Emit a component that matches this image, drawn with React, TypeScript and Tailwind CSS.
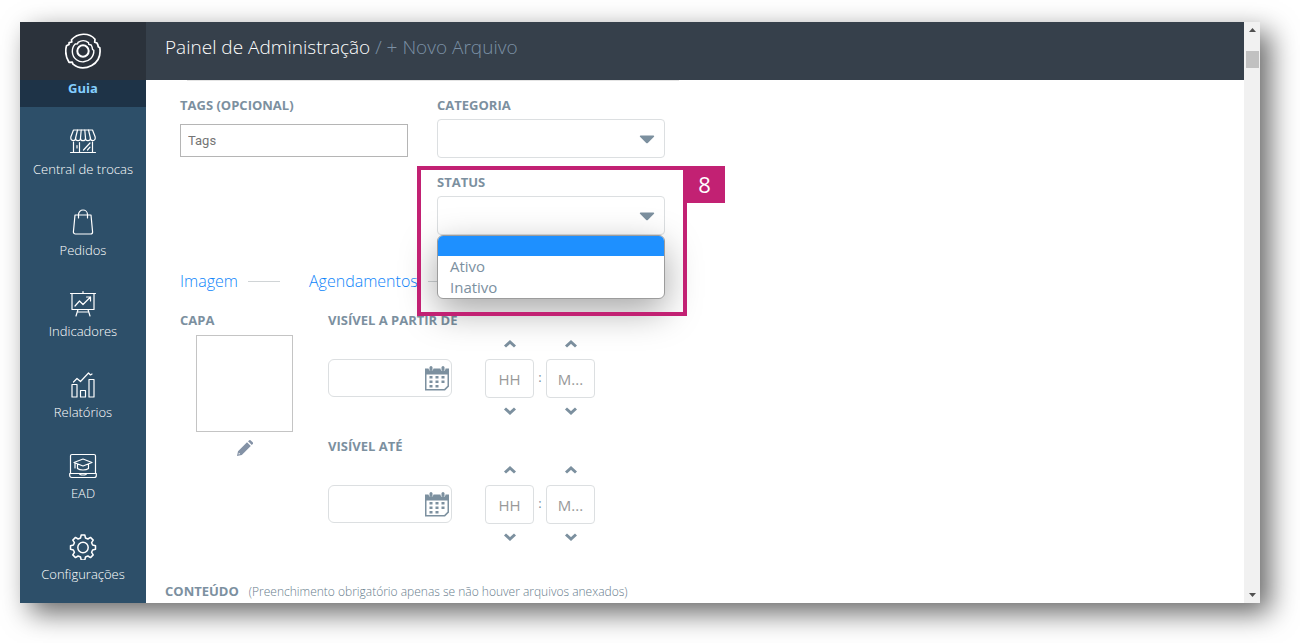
import type { ReactNode } from "react"

const iconProps = {
  width: 28,
  height: 28,
  viewBox: "0 0 28 28",
  fill: "none",
  stroke: "currentColor",
  strokeWidth: 1.2,
  strokeLinejoin: "round" as const,
  strokeLinecap: "round" as const,
  "aria-hidden": true,
}

const StoreIcon = () => (
  <svg {...iconProps}>
    <path d="M4.500 3h19l2.700 7v1.200a2.400 2.400 0 0 1-4.800 0 2.400 2.400 0 0 1-4.900 0 2.500 2.500 0 0 1-5 0 2.400 2.400 0 0 1-4.900 0 2.400 2.400 0 0 1-4.800 0V10z" />
    <path d="M8.500 3l-1.900 8M12.200 3l-.7 8M15.800 3l.7 8M19.500 3l1.900 8M1.500 25.500h25M4.500 15V25.500M10.500 15.500v10M23.500 15V25.500M8 18.500V21M14.500 23l6.500-7M18.500 23l2.500-2.800" />
  </svg>
)

const BagIcon = () => (
  <svg {...iconProps}>
    <path d="M6 7h16l1.600 17a2 2 0 0 1-2 2H6.400a2 2 0 0 1-2-2z" />
    <path d="M9.500 10V6.500a4.500 4.500 0 0 1 9 0V10" />
  </svg>
)

const BoardIcon = () => (
  <svg {...iconProps}>
    <path d="M1.500 4.500h25M14 2.500v2M3 4.500V20.500h22V4.500M9 20.500l-2 6.500M19 20.500l2 6.500M8.500 23h11" />
    <path d="M6 17l4.500-5 3.500 3.500L21.500 8M17.500 8h4v4" />
  </svg>
)

const ReportIcon = () => (
  <svg {...iconProps}>
    <path d="M3 14.500h5V27H3zM11.500 20.500h5V27h-5zM20 9.500h5V27h-5z" />
    <path d="M4.500 12l3.500-3.500 3.500 3L19.500 3l2 2L23 4" />
  </svg>
)

const CourseIcon = () => (
  <svg {...iconProps}>
    <path d="M1.500 22V5A1.500 1.500 0 0 1 3 3.500h22A1.500 1.500 0 0 1 26.500 5v17M.7 22.500h26.600v2a2 2 0 0 1-2 2H2.700a2 2 0 0 1-2-2zM10.500 22.500c0 2 7 2 7 0" />
    <path d="M14 8l9 3.500-9 3.500-9-3.500zM8.500 13v4.500c2.500 2 8.500 2 11 0V13M6 12v5" />
  </svg>
)

const GearIcon = () => (
  <svg {...iconProps}>
    <path
      strokeWidth="1.500"
      d="M12.200 3h3.600l.7 3 2.400 1 2.600-1.600 2.700 2.700-1.600 2.600 1 2.300 2.900.7v3.600l-2.900.7-1 2.300 1.600 2.600-2.700 2.700-2.600-1.600-2.400 1-.7 3h-3.600l-.7-3-2.400-1-2.600 1.600-2.700-2.700 1.600-2.600-1-2.300-2.900-.7v-3.600l2.900-.7 1-2.300-1.600-2.600 2.700-2.700L9.100 7l2.400-1z"
    />
    <circle cx="14" cy="15.500" r="5.200" strokeWidth="1.500" />
  </svg>
)

const Logo = () => (
  <svg width="36" height="36" viewBox="0 0 36 36" fill="none" stroke="#fff" strokeLinejoin="round" aria-hidden="true">
    <path strokeWidth="1.700" d="M6.500 6.800C12.500-.2 24-.8 30 6.200l-.3 3 2.300.8c.7 1.300 1.100 2.300 1.200 3.800l1.600.9c1.100 7.500-1.700 14.300-8.100 17.700-6.500 3.500-13.500 3-18.700-1.300l-.7-1.900-3.300.1C.4 23.500.2 17.500 1.500 12.800l2.500-1.300.1-1.900 2.700-.6z" />
    <path strokeWidth="1.400" d="M13 9.300c3.500-2.200 7.500-2 10.500.3l.3 1.700 2.400.7c1 1.700 1.400 2.700 1.400 4.500l1.200.8c.2 3-.8 6-3 8.200-4 4-10.300 4.400-14.300 1.200-5.500-4-5.200-12-1.300-15.700l2.500-.3z" />
    <circle cx="18" cy="18" r="5.700" strokeWidth="2" />
  </svg>
)

const CalendarIcon = () => (
  <svg width="26" height="26" viewBox="0 0 26 26" fill="#7c909f" aria-hidden="true">
    <path d="M1 3.500h3.500a2.500 2.500 0 0 0 5 0h7a2.500 2.500 0 0 0 5 0H25v18l-4 4H1zM2.500 9.500V24h17.700l3.300-3.300V9.500z" fillRule="evenodd" />
    <rect x="5.500" y="1" width="3" height="5" rx="1.500" />
    <rect x="17.500" y="1" width="3" height="5" rx="1.500" />
    <path d="M5.500 11h3v2.500h-3zM11.500 11h3v2.500h-3zM17.500 11h3v2.500h-3zM5.500 15.500h3V18h-3zM11.500 15.500h3V18h-3zM17.500 15.500h3V18h-3zM5.500 20h3v2.500h-3zM11.500 20h3v2.500h-3z" />
  </svg>
)

const menu = [
  { label: "Central de trocas", icon: <StoreIcon /> },
  { label: "Pedidos", icon: <BagIcon /> },
  { label: "Indicadores", icon: <BoardIcon /> },
  { label: "Relatórios", icon: <ReportIcon /> },
  { label: "EAD", icon: <CourseIcon /> },
  { label: "Configurações", icon: <GearIcon /> },
]

function Label({ htmlFor, children }: { htmlFor: string; children: ReactNode }) {
  return (
    <label htmlFor={htmlFor} className="block text-[13px] leading-5 font-bold whitespace-nowrap">
      {children}
    </label>
  )
}

function SelectBox({ id, options }: { id: string; options: string[] }) {
  return (
    <div className="relative mt-1">
      <select id={id} className="block h-[39px] w-full appearance-none rounded border border-[#dcdfe1] bg-white px-3">
        <option value=""></option>
        {options.map((o) => (
          <option key={o}>{o}</option>
        ))}
      </select>
      <svg className="pointer-events-none absolute top-4 right-2.5" width="16" height="9" viewBox="0 0 16 9" aria-hidden="true">
        <path d="M1.500.5h13a.8.800 0 0 1 .5 1.300L8.800 8a1.200 1.200 0 0 1-1.600 0L1 1.800A.8.800 0 0 1 1.500.5z" fill="#7c909f" />
      </svg>
    </div>
  )
}

function Chevron({ down }: { down?: boolean }) {
  return (
    <svg width="14" height="10" viewBox="0 0 14 10" fill="none" stroke="#7c909f" strokeWidth="3" aria-hidden="true">
      <path d={down ? "M2 2.500l5 4.500 5-4.500" : "M2 7.500l5-4.500 5 4.500"} />
    </svg>
  )
}

function TimeBox({ name, placeholder }: { name: string; placeholder: string }) {
  return (
    <div className="flex w-[49px] flex-col">
      <button type="button" aria-label={`Aumentar ${name}`} className="mb-[5px] flex h-5 items-center justify-center"><Chevron /></button>
      <input
        aria-label={name}
        placeholder={placeholder}
        className="h-[39px] w-full rounded border border-[#dcdfe1] bg-white text-center text-[15px] placeholder:text-[#999]"
      />
      <button type="button" aria-label={`Diminuir ${name}`} className="mt-[3px] flex h-5 items-center justify-center"><Chevron down /></button>
    </div>
  )
}

function DateTimeField({ id, label }: { id: string; label: string }) {
  return (
    <div>
      <Label htmlFor={id}>{label}</Label>
      <div className="mt-1 flex items-center">
        <div className="relative mr-[33px]">
          <input id={id} className="block h-[38px] w-[124px] rounded-md border border-[#dcdfe1] bg-white pr-8 pl-2 text-[15px]" />
          <button type="button" aria-label="Abrir calendário" className="absolute top-1.5 right-0.5"><CalendarIcon /></button>
        </div>
        <TimeBox name={`Hora, ${label}`} placeholder="HH" />
        <span className="w-3 text-center text-[13px]">:</span>
        <TimeBox name={`Minuto, ${label}`} placeholder="M..." />
      </div>
    </div>
  )
}

export default function App() {
  return (
    <div className="h-screen overflow-hidden bg-white pt-[22px] pr-10 pb-10 pl-5 font-['Open_Sans','Noto_Sans',sans-serif] text-[#7c909f]">
      <div className="flex h-full bg-white shadow-[10px_10px_26px_rgba(0,0,0,0.6)]">
        <nav className="flex w-[126px] shrink-0 flex-col overflow-hidden bg-[#2d4f69] text-[13px] text-white">
          <div className="flex h-[58px] shrink-0 items-center justify-center bg-[#2b323b]"><Logo /></div>
          <a href="#guia" className="h-[27px] shrink-0 bg-[#1e3347] text-center leading-[17px] font-bold text-[#84cfff]">Guia</a>
          {menu.map((m) => (
            <a key={m.label} href={`#${m.label}`} className="flex h-[81px] shrink-0 flex-col items-center gap-1 pt-5 leading-5 font-light">
              {m.icon}
              {m.label}
            </a>
          ))}
        </nav>

        <div className="flex min-w-0 flex-1 flex-col">
          <header className="h-[58px] shrink-0 bg-[#36404b] pl-[19px] text-[19px] leading-[51px] font-light text-[#7b90a5]">
            <span className="text-white">Painel de Administração</span> / + Novo Arquivo
          </header>

          <main className="min-h-0 flex-1 overflow-hidden">
            <div className="ml-[41px] w-[492px] border-t border-[#e4e4e4]"></div>
            <form className="w-[519px] pt-3.5 pl-[34px]">
              <div className="grid grid-cols-2 gap-x-[29px]">
                <div>
                  <Label htmlFor="tags">TAGS (OPCIONAL)</Label>
                  <input
                    id="tags"
                    placeholder="Tags"
                    className="mt-[9px] block h-[33px] w-full border border-[#b5b5b5] bg-white px-[7px] font-[Roboto,sans-serif] text-[13px] placeholder:text-[#757575]"
                  />
                </div>
                <div>
                  <Label htmlFor="categoria">CATEGORIA</Label>
                  <SelectBox id="categoria" options={[]} />
                </div>
                <div className="relative z-10 col-start-2 mt-3.5">
                  <Label htmlFor="status">STATUS</Label>
                  <SelectBox id="status" options={["Ativo", "Inativo"]} />
                  <ul
                    role="listbox"
                    aria-label="Status"
                    className="absolute inset-x-0 top-[63px] overflow-hidden rounded-md border border-[#9c9c9c] bg-white text-[15px] leading-[21px] shadow-[0_12px_36px_rgba(0,0,0,0.35)]"
                  >
                    <li role="option" aria-selected="true" className="h-5 bg-[#1e90ff]"></li>
                    <li role="option" aria-selected="false" className="px-3">Ativo</li>
                    <li role="option" aria-selected="false" className="px-3">Inativo</li>
                  </ul>
                  <div className="pointer-events-none absolute -top-1.5 -left-5 h-[150px] w-[270px] border-4 border-[#c22173]"></div>
                  <div className="absolute -top-1.5 left-[247px] h-[37px] w-[41px] bg-[#c22173] text-center text-[22px] leading-[37px] text-white">8</div>
                </div>
              </div>

              <div className="mt-[34px] flex gap-4">
                <section className="w-[113px]">
                  <h2 className="flex items-center gap-2.5 leading-6 font-light text-[#0d84fa]">
                    Imagem
                    <span className="w-8 border-t border-[#d0d4d6]"></span>
                  </h2>
                  <div className="mt-[17px]">
                    <Label htmlFor="capa">CAPA</Label>
                    <button id="capa" type="button" className="mt-[5px] ml-4 flex flex-col items-center gap-2">
                      <span className="block h-[97px] w-[97px] border border-[#c4c4c4] bg-white"></span>
                      <svg width="16" height="16" viewBox="0 0 16 16" fill="#8492a6" aria-hidden="true">
                        <path d="M0 16l1-4.800L10 2.200 13.800 6l-9 9zM11 1.300L12 .4a1.300 1.300 0 0 1 1.800 0l1.900 1.900a1.300 1.300 0 0 1 0 1.800l-.9.900zM1.500 14.500l1.700-.4-1.300-1.300z" fillRule="evenodd" />
                      </svg>
                    </button>
                  </div>
                </section>

                <section className="flex-1">
                  <h2 className="flex items-center gap-2.5 leading-6 font-light text-[#0d84fa]">
                    Agendamentos
                    <span className="flex-1 border-t border-[#d0d4d6]"></span>
                  </h2>
                  <div className="mt-[17px] flex flex-col gap-[15px] pl-[19px]">
                    <DateTimeField id="visivel-de" label="VISÍVEL A PARTIR DE" />
                    <DateTimeField id="visivel-ate" label="VISÍVEL ATÉ" />
                  </div>
                </section>
              </div>
            </form>
            <p className="mt-[34px] pl-[19px] text-xs leading-5 font-light text-[#677c8c]">
              <strong className="mr-2.5 text-[13px] leading-5 font-bold text-[#7c909f]">CONTEÚDO</strong>
              (Preenchimento obrigatório apenas se não houver arquivos anexados)
            </p>
          </main>
        </div>

        <div className="flex w-4 shrink-0 flex-col items-center bg-[#f1f1f1] py-1.5">
          <svg width="7" height="4" viewBox="0 0 7 4" aria-hidden="true"><path d="M0 4l3.500-4L7 4z" fill="#505050" /></svg>
          <div className="mt-[19px] h-[17px] w-[13px] bg-[#c1c1c1]"></div>
          <svg className="mt-auto" width="7" height="4" viewBox="0 0 7 4" aria-hidden="true"><path d="M0 0h7L3.500 4z" fill="#505050" /></svg>
        </div>
      </div>
    </div>
  )
}
